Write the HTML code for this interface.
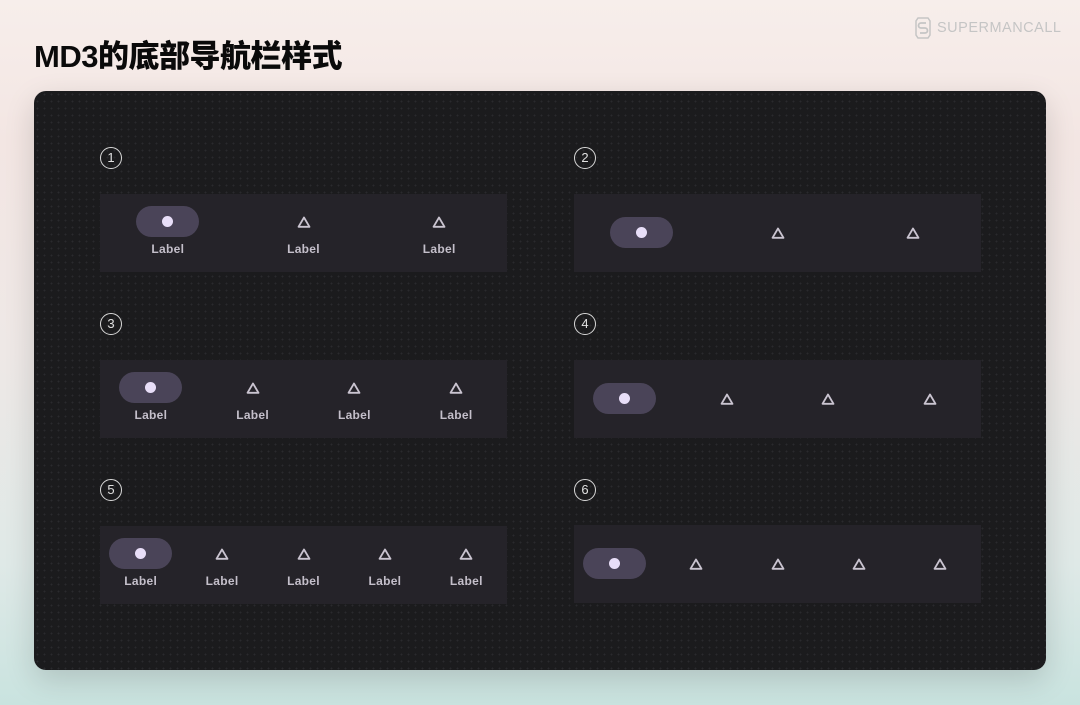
<!DOCTYPE html>
<html><head><meta charset="utf-8"><style>
*{margin:0;padding:0;box-sizing:border-box}
body{width:1080px;height:705px;overflow:hidden;position:relative;font-family:"Liberation Sans","Noto Sans CJK SC",sans-serif;
background:linear-gradient(180deg,#f7eeeb 0%,#f3e6e3 20%,#eee8e6 50%,#dfe9e7 80%,#c9e3df 100%);}
h1{position:absolute;left:34px;top:31px;font-size:31px;font-weight:900;color:#0a0a0a;letter-spacing:-0.5px;font-family:"Liberation Sans","Noto Sans CJK SC",sans-serif}
.logo{position:absolute;left:915px;top:17px;display:flex;align-items:center;gap:6px;color:#c5c5c5;font-size:14.5px;letter-spacing:0.5px}
.card{position:absolute;left:34px;top:91px;width:1012px;height:579px;border-radius:12px;background-color:#1b1b1d;
background-image:radial-gradient(circle,#2a2a2d 0.8px,transparent 1px);background-size:7px 7px;box-shadow:0 10px 30px rgba(0,0,0,0.15)}
.num{position:absolute;width:22px;height:22px;border:1.5px solid #d8d8d8;border-radius:50%;color:#e0e0e0;font-size:13px;text-align:center;line-height:19px}
.panel{position:absolute;width:407px;height:78px;background:#252329}
.pill{position:absolute;width:63px;height:31px;border-radius:16px;background:#4a4458}
.pill::after{content:"";position:absolute;left:26px;top:10px;width:11px;height:11px;border-radius:50%;background:#e8def8}
.lab{position:absolute;width:60px;text-align:center;font-size:12px;font-weight:bold;color:#c4bfca;transform:translateX(-30px);letter-spacing:0.3px}
.tri{position:absolute;width:14px;height:12px;transform:translateX(-7px)}
</style></head><body>
<h1>MD3的底部导航栏样式</h1>
<div class="logo"><svg width="16" height="22" viewBox="0 0 16 22"><path d="M3 1h10l2 3v14l-2 3H3l-2-3V4z" fill="none" stroke="#c5c5c5" stroke-width="1.5"/><path d="M11 6H6a2 2 0 0 0 0 5h4a2 2 0 0 1 0 5H5" fill="none" stroke="#c5c5c5" stroke-width="1.8"/></svg>SUPERMANCALL</div>
<div class="card"></div>
<div id="c"></div>
<script>
const tri='<svg viewBox="0 0 14 12" width="14" height="12"><path d="M7 1.5L12.5 10.8H1.5Z" fill="none" stroke="#cac4d0" stroke-width="1.8" stroke-linejoin="round"/></svg>';
let h='';
const rows=[194,360,526];const ns=[3,4,5];
rows.forEach((y,i)=>{const n=ns[i];
 [[100,true],[574,false]].forEach(([x,lab],j)=>{
  const num=i*2+j+1;
  h+=`<div class="num" style="left:${x}px;top:${y-47}px">${num}</div>`;
  const py=(i==2&&!lab)?y-1:y;
  h+=`<div class="panel" style="left:${x}px;top:${py}px"></div>`;
  const w=407/n;
  for(let k=0;k<n;k++){const cx=x+w*(k+0.5);
   const iy=lab?py+27:py+38;
   if(k==0){h+=`<div class="pill" style="left:${cx-31.5}px;top:${iy-15}px"></div>`;}
   else h+=`<div class="tri" style="left:${cx}px;top:${iy-6}px">${tri}</div>`;
   if(lab)h+=`<div class="lab" style="left:${cx}px;top:${py+48}px">Label</div>`;
  }
 });
});
document.getElementById('c').innerHTML=h;
</script>
</body></html>
